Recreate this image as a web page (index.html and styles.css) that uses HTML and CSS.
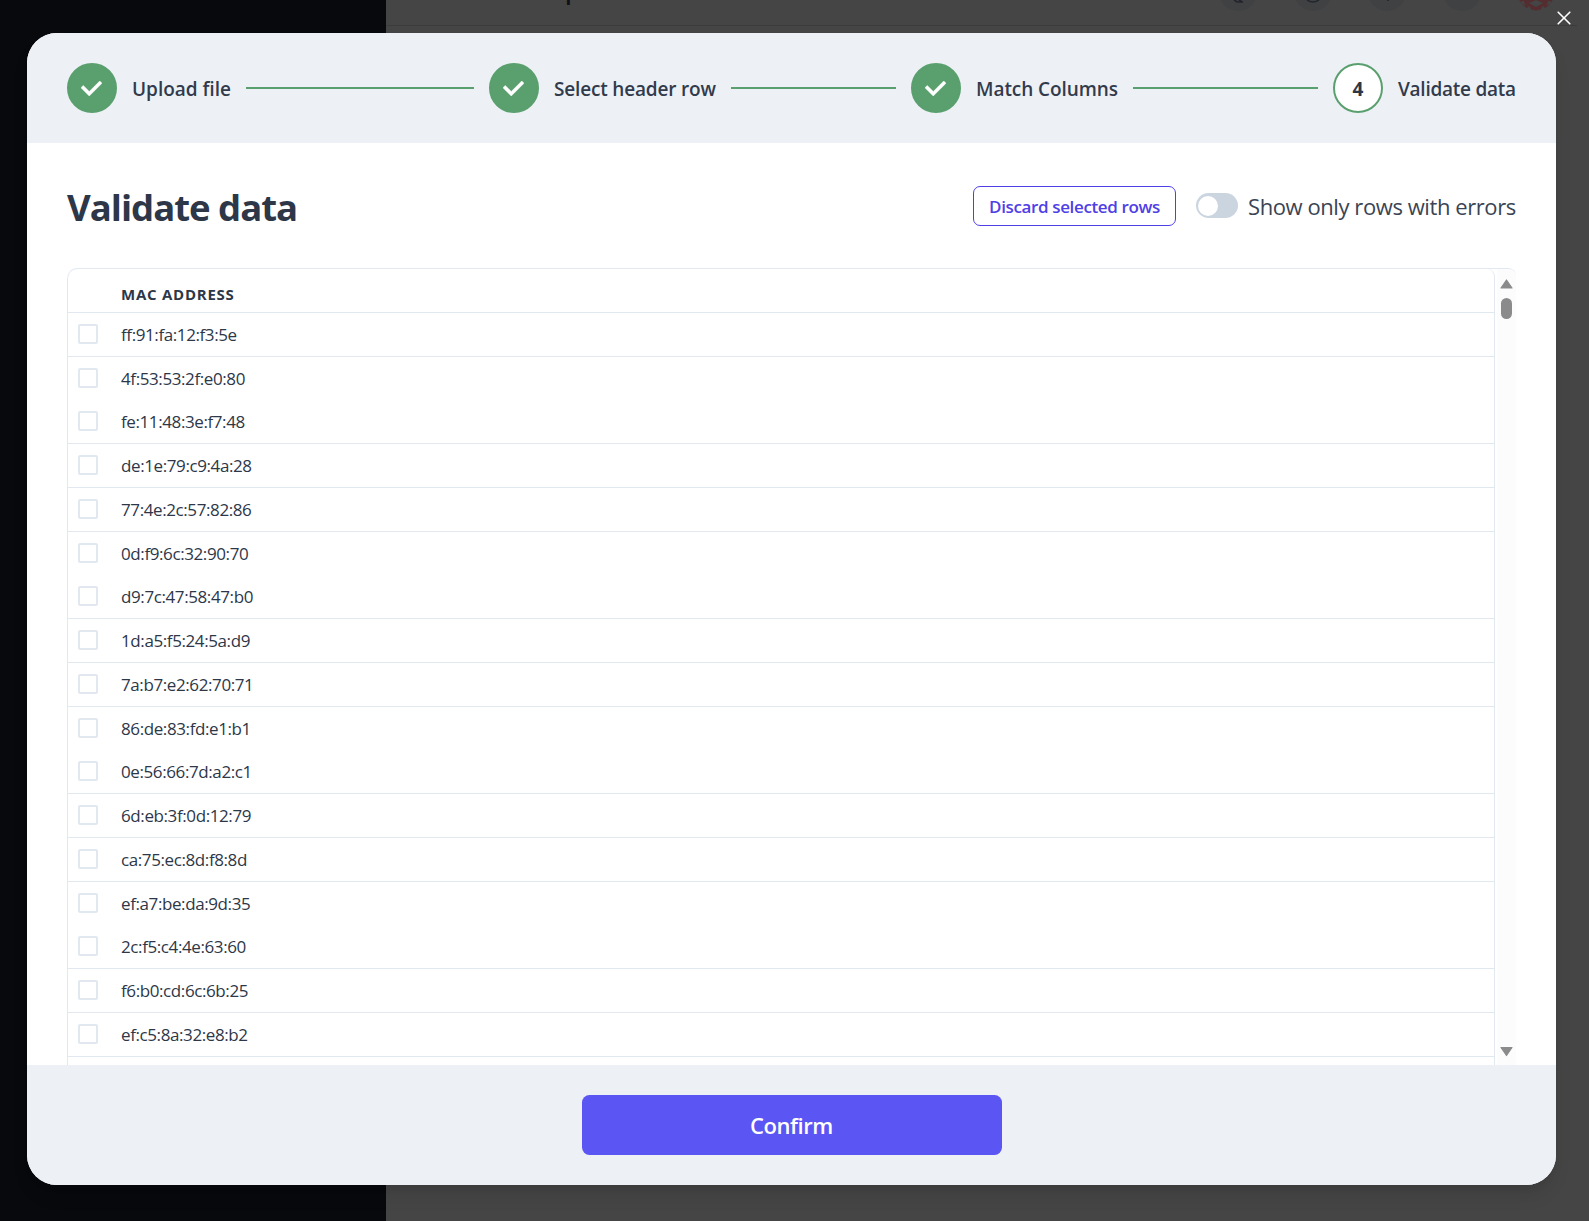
FILE: index.html
```html
<!DOCTYPE html>
<html lang="en">
<head>
<meta charset="utf-8">
<title>Validate data</title>
<link rel="stylesheet" href="styles.css">
</head>
<body>
<div class="app">
  <div class="sidebar"></div>
  <div class="page">
    <div class="topbar">
      <span class="page-title">p</span>
      <div class="tools">
        <span class="tool"><svg viewBox="0 0 38 38"><path d="M15 26 q2 1 3 2 h6" /><path d="M19 25 l4 3" /></svg></span>
        <span class="tool"><svg viewBox="0 0 38 38"><circle cx="19" cy="19" r="9" /></svg></span>
        <span class="tool"><svg viewBox="0 0 38 38"><path d="M20 12 V27" /></svg></span>
        <span class="tool"></span>
        <span class="avatar"><svg viewBox="0 0 38 38"><circle cx="19" cy="19" r="18.5" fill="#532d30" /><path d="M3 29 l4 -1 1 5z M12 30 l7 -3 7 3 -7 4z M35 29 l-4 -1 -1 5z M9 36 l3 -3 3 4z M29 36 l-3 -3 -3 4z" fill="#454545" /></svg></span>
      </div>
    </div>
  </div>
</div>

<button class="close" aria-label="Close"><svg viewBox="0 0 14 14"><path d="M1.2 1.2 L12.8 12.8 M12.8 1.2 L1.2 12.8" /></svg></button>

<div class="modal">
  <div class="steps">
    <div class="step">
      <span class="dot done"><svg viewBox="0 0 14 14"><polygon points="5.5 12 14 3.5 12.5 2 5.5 9 1.5 5 0 6.5" /></svg></span>
      <span class="label upload">Upload file</span><span class="line"></span>
    </div>
    <div class="step">
      <span class="dot done"><svg viewBox="0 0 14 14"><polygon points="5.5 12 14 3.5 12.5 2 5.5 9 1.5 5 0 6.5" /></svg></span>
      <span class="label select">Select header row</span><span class="line"></span>
    </div>
    <div class="step">
      <span class="dot done"><svg viewBox="0 0 14 14"><polygon points="5.5 12 14 3.5 12.5 2 5.5 9 1.5 5 0 6.5" /></svg></span>
      <span class="label match">Match Columns</span><span class="line"></span>
    </div>
    <div class="step last">
      <span class="dot"><span class="number">4</span></span>
      <span class="label validate">Validate data</span>
    </div>
  </div>

  <div class="content">
    <div class="heading">
      <h1>Validate data</h1>
      <button class="discard">Discard selected rows</button>
      <span class="switch"><span class="knob"></span></span>
      <span class="switch-label">Show only rows with errors</span>
    </div>
    <div class="table-wrap">
      <div class="table">
        <div class="thead">MAC ADDRESS</div>
        <div class="row"><span class="box"></span><span>ff:91:fa:12:f3:5e</span></div>
        <div class="row"><span class="box"></span><span>4f:53:53:2f:e0:80</span></div>
        <div class="row"><span class="box"></span><span>fe:11:48:3e:f7:48</span></div>
        <div class="row"><span class="box"></span><span>de:1e:79:c9:4a:28</span></div>
        <div class="row"><span class="box"></span><span>77:4e:2c:57:82:86</span></div>
        <div class="row"><span class="box"></span><span>0d:f9:6c:32:90:70</span></div>
        <div class="row"><span class="box"></span><span>d9:7c:47:58:47:b0</span></div>
        <div class="row"><span class="box"></span><span>1d:a5:f5:24:5a:d9</span></div>
        <div class="row"><span class="box"></span><span>7a:b7:e2:62:70:71</span></div>
        <div class="row"><span class="box"></span><span>86:de:83:fd:e1:b1</span></div>
        <div class="row"><span class="box"></span><span>0e:56:66:7d:a2:c1</span></div>
        <div class="row"><span class="box"></span><span>6d:eb:3f:0d:12:79</span></div>
        <div class="row"><span class="box"></span><span>ca:75:ec:8d:f8:8d</span></div>
        <div class="row"><span class="box"></span><span>ef:a7:be:da:9d:35</span></div>
        <div class="row"><span class="box"></span><span>2c:f5:c4:4e:63:60</span></div>
        <div class="row"><span class="box"></span><span>f6:b0:cd:6c:6b:25</span></div>
        <div class="row"><span class="box"></span><span>ef:c5:8a:32:e8:b2</span></div>
      </div>
      <div class="scrollbar">
        <svg class="arrow" viewBox="0 0 13 11"><path d="M6.5 1 L12 9 H1 Z" /></svg>
        <span class="thumb"></span>
        <svg class="arrow down" viewBox="0 0 13 11"><path d="M6.5 9.5 L1 1.5 H12 Z" /></svg>
      </div>
    </div>
  </div>

  <div class="footer"><button class="confirm">Confirm</button></div>
</div>
</body>
</html>
```

FILE: styles.css
```css
* { box-sizing: border-box; }
html, body { height: 100%; }
body {
  margin: 0;
  overflow: hidden;
  font-family: "Open Sans", "Noto Sans", sans-serif;
  color: #2d3748;
}
button { font-family: inherit; margin: 0; padding: 0; cursor: pointer; }
svg { display: block; }

.app { display: flex; height: 100%; }
.sidebar { width: 386px; background: #08090c; }
.page { flex: 1; background: #454545; }
.topbar {
  display: flex;
  justify-content: space-between;
  width: 1191px;
  height: 26px;
  padding-left: 179px;
  padding-right: 22px;
  border-bottom: 1px solid #3b3b3b;
  overflow: hidden;
}
.page-title { margin-top: -26px; font-size: 24px; line-height: 32px; font-weight: 600; color: #0e1017; }
.tools { display: flex; gap: 36.5px; margin-top: -27px; height: 38px; }
.tool, .avatar { width: 38px; height: 38px; border-radius: 50%; }
.tool { background: #404143; }
.tool svg { fill: none; stroke: #22252e; stroke-width: 1.6; margin-top: 0.5px; }

.close {
  position: absolute;
  top: 11px;
  right: 18px;
  width: 14px;
  height: 14px;
  border: 0;
  background: none;
}
.close svg { fill: none; stroke: #fff; stroke-width: 1.6; stroke-linecap: round; }

.modal {
  position: absolute;
  inset: 33px 33px 36px 27px;
  display: flex;
  flex-direction: column;
  border-radius: 30px;
  background: #fff;
  overflow: hidden;
  box-shadow: 0 12.5px 19px -4px rgba(0, 0, 0, 0.1), 0 5px 7.5px -2.5px rgba(0, 0, 0, 0.05);
}

.steps {
  display: flex;
  align-items: center;
  gap: 15px;
  height: 110px;
  padding: 0 40px;
  background: #edf1f6;
}
.step { flex: 1; display: flex; align-items: center; gap: 15px; }
.step.last { flex: none; }
.dot {
  display: flex;
  align-items: center;
  justify-content: center;
  flex: none;
  width: 50px;
  height: 50px;
  border: 2px solid #5a9f6e;
  border-radius: 50%;
  background: #fff;
}
.dot.done { background: #5a9f6e; }
.dot svg { width: 21px; height: 21px; margin-right: 1px; fill: #fff; stroke: #fff; stroke-width: 0.35; }
.number { padding-top: 2px; font-size: 19px; font-weight: 700; }
.label { padding-top: 1px; font-size: 19px; font-weight: 600; line-height: 26px; white-space: nowrap; color: #323b4c; }
.upload { width: 99px; }
.select { width: 162px; letter-spacing: -0.18px; }
.match { width: 142px; letter-spacing: -0.07px; }
.validate { width: 118px; letter-spacing: -0.25px; }
.line { flex: 1; height: 2px; background: #5a9f6e; }

.content { flex: 1; min-height: 0; display: flex; flex-direction: column; padding: 43px 40px 0; }
.heading { display: flex; align-items: center; height: 40px; }
h1 {
  flex: 1;
  margin: 0;
  padding-top: 2px;
  font-size: 36.5px;
  line-height: 46px;
  font-weight: 700;
  letter-spacing: -1px;
}
.discard {
  width: 203px;
  height: 40px;
  border: 1px solid #4f40e6;
  border-radius: 7px;
  background: #fff;
  color: #4f40e6;
  font-size: 17px;
  font-weight: 600;
  letter-spacing: -0.37px;
  white-space: nowrap;
}
.switch { width: 42px; height: 25px; margin: -1px 10px 0 20px; padding: 2.5px 2px; border-radius: 13px; background: #cbd5e0; }
.knob { display: block; width: 20px; height: 20px; border-radius: 50%; background: #fff; }
.switch-label { width: 268px; font-size: 22px; letter-spacing: -0.42px; line-height: 30px; white-space: nowrap; color: #3a4454; }

.table-wrap {
  flex: 1;
  min-height: 0;
  display: flex;
  margin-top: 42px;
  border-top: 1px solid #e2e8f0;
  border-radius: 10px 8px 0 0;
  overflow: hidden;
}
.table { width: 1428px; border: solid #e2e8f0; border-width: 0 1px; border-radius: 10px 8px 0 0; }
.thead {
  height: 44px;
  padding: 8px 0 0 53px;
  border-bottom: 1px solid #e2e8f0;
  font-size: 15px;
  line-height: 34px;
  font-weight: 700;
  letter-spacing: 0.75px;
}
.row {
  display: flex;
  align-items: center;
  gap: 23px;
  height: 44px;
  padding-left: 10px;
  border-bottom: 1px solid #e2e8f0;
  font-size: 17px;
  letter-spacing: -0.4px;
}
/* 43.75px rows snapped to whole pixels */
.row:nth-child(4n + 3) { height: 43px; border-bottom: 0; }
.box { width: 20px; height: 20px; margin-top: -1px; border: 2px solid #e2e8f0; border-radius: 2px; }

.scrollbar {
  display: flex;
  flex-direction: column;
  align-items: center;
  width: 19px;
  margin-left: 2px;
  padding: 10px 0 8px;
  background: #fcfcfc;
}
.arrow { width: 13px; height: 11px; fill: #8b8b8b; stroke: #8b8b8b; stroke-width: 1.2; stroke-linejoin: round; }
.thumb { width: 11px; height: 21px; margin-top: 8px; border-radius: 6px; background: #8b8b8b; }
.down { margin-top: auto; }

.footer { display: flex; justify-content: center; align-items: center; height: 120px; background: #edf1f6; }
.confirm {
  width: 420px;
  height: 60px;
  border: 0;
  border-radius: 7.5px;
  background: #5b55f4;
  color: #fff;
  font-size: 22px;
  font-weight: 600;
  letter-spacing: -0.45px;
}
```
